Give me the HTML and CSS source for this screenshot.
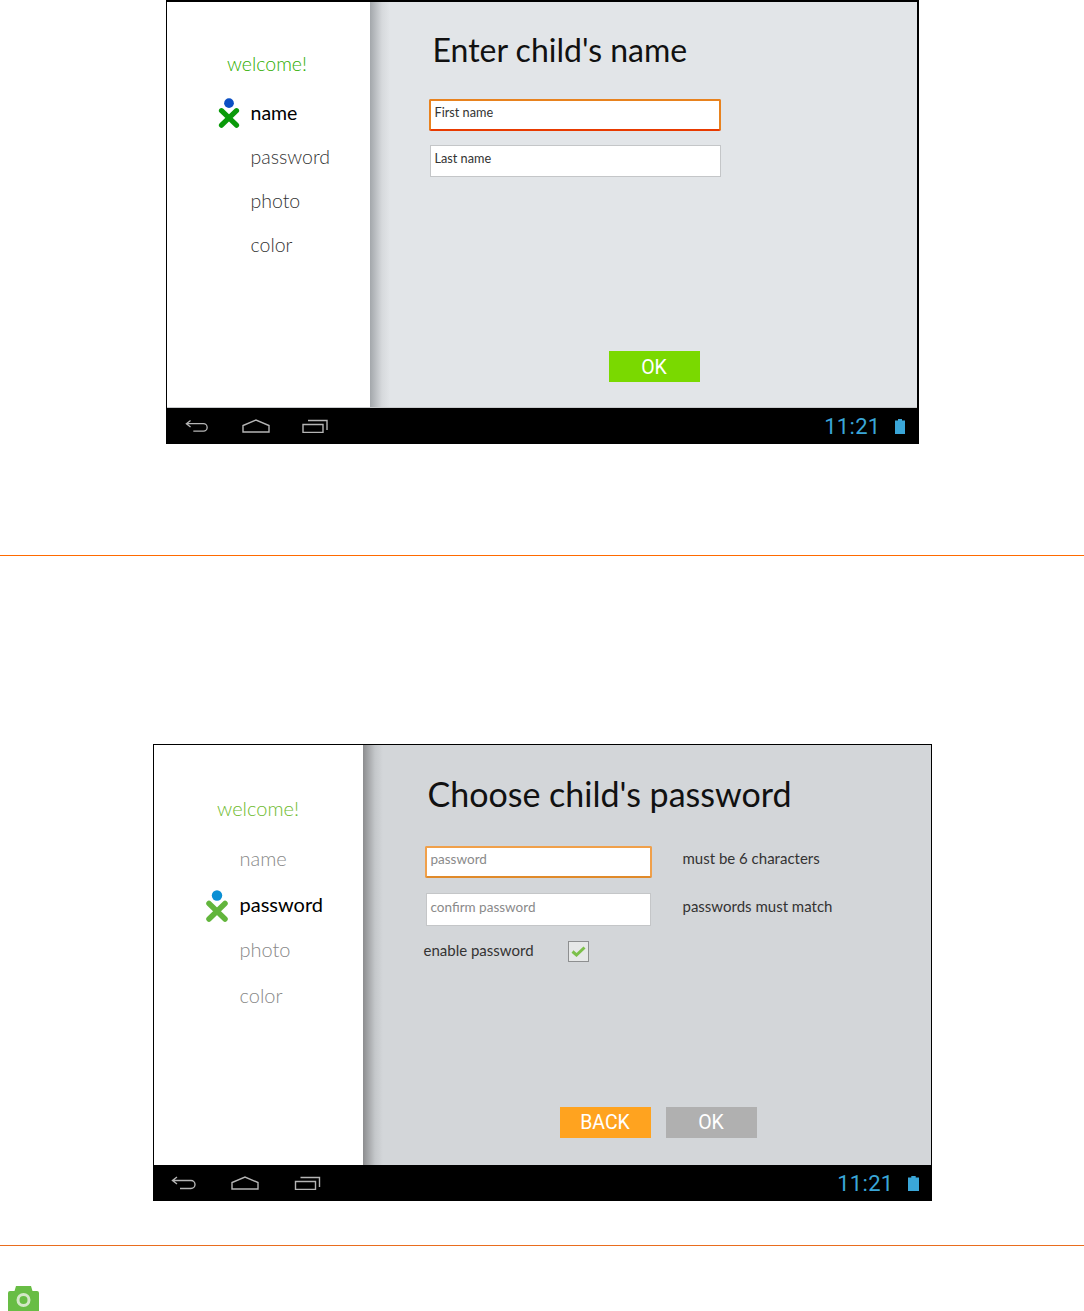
FILE: index.html
```html
<!DOCTYPE html>
<html lang="en">
<head>
<meta charset="utf-8">
<title>Child setup</title>
<link rel="stylesheet" href="styles.css">
</head>
<body>
<section class="fig fig-one">
  <div class="tablet tablet-one">
    <div class="app">
      <nav class="side side-one">
        <div class="welcome">welcome!</div>
        <div class="step current"><svg class="xo" viewBox="0 0 24 32"><circle cx="12" cy="5.5" r="5.2" fill="#0b4fc4"/><path d="M4 13.5 20 29M20 13.5 4 29" stroke="#0a9a0a" stroke-width="5.5" stroke-linecap="round"/></svg><span>name</span></div>
        <div class="step">password</div>
        <div class="step">photo</div>
        <div class="step">color</div>
      </nav>
      <main class="pane pane-one">
        <h1>Enter child's name</h1>
        <div class="field focus">First name</div>
        <div class="field">Last name</div>
        <div class="actions"><div class="btn green">OK</div></div>
      </main>
    </div>
    <footer class="bar">
      <div class="keys">
        <svg class="k-back" viewBox="0 0 26 14"><path d="M6 1 1.5 4.5 6 8M2 4.5H20a4 4 0 0 1 0 8H9" fill="none" stroke="#b5b5b5" stroke-width="1.4"/></svg>
        <svg class="k-home" viewBox="0 0 28 14"><path d="M1 13V6.5L14 1l13 5.5V13Z" fill="none" stroke="#b5b5b5" stroke-width="1.4"/></svg>
        <svg class="k-recent" viewBox="0 0 26 14"><path d="M1 5.5h20v8H1ZM6 1.5h19V11" fill="none" stroke="#b5b5b5" stroke-width="1.4"/></svg>
      </div>
      <div class="status"><span class="clock">11:21</span><svg class="batt" viewBox="0 0 10 15" preserveAspectRatio="none"><path d="M3 0h4v1.5H10V15H0V1.5h3Z" fill="#3aa6d8"/></svg></div>
    </footer>
  </div>
</section>
<hr class="rule rule-one">
<section class="fig fig-two">
  <div class="tablet tablet-two">
    <div class="app">
      <nav class="side side-two">
        <div class="welcome">welcome!</div>
        <div class="step">name</div>
        <div class="step current"><svg class="xo" viewBox="0 0 24 32"><circle cx="12" cy="5.5" r="5.2" fill="#0a8fd4"/><path d="M4 13.5 20 29M20 13.5 4 29" stroke="#62b53c" stroke-width="5.5" stroke-linecap="round"/></svg><span>password</span></div>
        <div class="step">photo</div>
        <div class="step">color</div>
      </nav>
      <main class="pane pane-two">
        <h1>Choose child's password</h1>
        <div class="row"><div class="field focus">password</div><div class="hint">must be 6 characters</div></div>
        <div class="row"><div class="field">confirm password</div><div class="hint">passwords must match</div></div>
        <div class="check-row"><span class="hint">enable password</span><span class="check"><svg viewBox="0 0 15 11"><path d="M1.5 5.5 5.5 9 13.5 1.5" fill="none" stroke="#7cc04a" stroke-width="3"/></svg></span></div>
        <div class="actions"><div class="btn orange">BACK</div><div class="btn grey">OK</div></div>
      </main>
    </div>
    <footer class="bar">
      <div class="keys">
        <svg class="k-back" viewBox="0 0 26 14"><path d="M6 1 1.5 4.5 6 8M2 4.5H20a4 4 0 0 1 0 8H9" fill="none" stroke="#b5b5b5" stroke-width="1.4"/></svg>
        <svg class="k-home" viewBox="0 0 28 14"><path d="M1 13V6.5L14 1l13 5.5V13Z" fill="none" stroke="#b5b5b5" stroke-width="1.4"/></svg>
        <svg class="k-recent" viewBox="0 0 26 14"><path d="M1 5.5h20v8H1ZM6 1.5h19V11" fill="none" stroke="#b5b5b5" stroke-width="1.4"/></svg>
      </div>
      <div class="status"><span class="clock">11:21</span><svg class="batt" viewBox="0 0 10 15" preserveAspectRatio="none"><path d="M3 0h4v1.5H10V15H0V1.5h3Z" fill="#3aa6d8"/></svg></div>
    </footer>
  </div>
</section>
<hr class="rule rule-two">
<svg class="camera" viewBox="0 0 31 25"><path d="M8 0h15l1.5 5H29a2 2 0 0 1 2 2V25H0V7a2 2 0 0 1 2-2h4.5Z" fill="#68bd45"/><circle cx="15.5" cy="14" r="5.5" fill="none" stroke="#d4e8c8" stroke-width="3"/></svg>
</body>
</html>
```

FILE: styles.css
```css
html, body { margin: 0; padding: 0; }
body { width: 1084px; height: 1311px; overflow: hidden; background: #fff; font-family: "Lato", "Liberation Sans", sans-serif; display: flex; flex-direction: column; align-items: center; }
.fig { display: flex; justify-content: center; width: 100%; box-sizing: border-box; flex: none; }
.fig-one { height: 555px; }
.fig-two { height: 689px; padding-top: 188px; }
.rule { width: 100%; height: 1px; margin: 0; border: 0; flex: none; }
.rule-one { background: #ff6a00; }
.rule-two { background: #e96d1e; }
.tablet { display: flex; flex-direction: column; background: #000; box-sizing: border-box; }
.tablet-one { width: 753px; height: 444px; padding: 2px 2px 0 1px; }
.tablet-two { width: 779px; height: 457px; padding: 1px 1px 0; }
.app { flex: 1; display: flex; min-height: 0; }
.tablet-one .app { border-bottom: 1px solid #c9cbcd; }
.side { background: #fff; display: flex; flex-direction: column; box-sizing: border-box; flex: none; }
.side-one { width: 203px; padding-top: 48px; }
.side-two { width: 209px; padding-top: 49px; }
.welcome { font-weight: 300; text-align: center; line-height: 28px; }
.side-one .welcome { color: #2fae00; font-size: 19.5px; padding-right: 2px; margin-bottom: 12.5px; }
.side-two .welcome { color: #6fbb2f; font-size: 20px; margin-bottom: 14px; }
.step { position: relative; font-weight: 300; }
.side-one .step { color: #333; font-size: 19.5px; height: 44px; line-height: 44px; padding-left: 84px; }
.side-two .step { color: #888; font-size: 20px; height: 45.5px; line-height: 45px; padding-left: 86px; }
.step.current span { font-weight: 400; color: #000; }
.xo { position: absolute; }
.side-one .xo { left: 50px; top: 7.5px; width: 24px; height: 30px; }
.side-two .xo { left: 51px; top: 8px; width: 24px; height: 32px; }
.pane { flex: 1; display: flex; flex-direction: column; position: relative; box-sizing: border-box; padding-top: 26px; }
.pane::before { content: ""; position: absolute; left: 0; top: 0; bottom: 0; width: 20px; }
.pane-one::before { background: linear-gradient(90deg, #a3a7ab, #d6d9dc 60%, #e2e5e8); }
.pane-two::before { background: linear-gradient(90deg, #8c8d8f, #c4c7ca 60%, #d3d6d9); }
.pane-one { background: #e2e5e8; padding-left: 60px; }
.pane-two { background: #d3d6d9; padding-left: 62px; }
h1 { margin: 0; font-weight: 400; color: #111; }
.pane-one h1 { font-size: 32px; line-height: 44px; margin-left: 3px; margin-bottom: 27px; }
.pane-two h1 { font-size: 34px; line-height: 46px; margin-left: 3px; margin-bottom: 29px; }
.field { background: #fff; box-sizing: border-box; color: #333; border: 1px solid #c4c6c8; }
.pane-one .field { width: 291px; height: 32px; line-height: 24px; padding-left: 4px; margin-bottom: 14px; font-size: 12.7px; }
.pane-one .field.focus { border: 2px solid #e8821e; border-bottom-color: #e83a00; border-radius: 2px; padding-left: 4px; line-height: 22px; margin-left: -1px; width: 292px; }
.pane-two .field { width: 225px; height: 33px; line-height: 26px; padding-left: 4px; color: #8a8a8a; font-size: 13.5px; margin-left: 1px; }
.pane-two .field.focus { width: 227px; height: 32px; margin-left: 0; line-height: 22px; border: 2px solid #f0a04a; border-bottom-color: #e08a2a; border-radius: 2px; }
.row { display: grid; grid-template-columns: 258px 1fr; align-items: start; height: 47px; }
.row .hint { line-height: 24px; }
.row + .row .hint { padding-top: 1px; }
.hint { font-size: 15px; color: #333; }
.check-row { display: flex; align-items: center; height: 22px; margin-left: -1px; }
.check-row .hint { padding-bottom: 2px; }
.check { width: 21px; height: 21px; box-sizing: border-box; border: 1px solid #8d8f90; background: #e6e8e8; margin-left: 34px; display: flex; align-items: center; justify-content: center; }
.check svg { width: 15px; height: 11px; }
.actions { display: flex; gap: 15px; margin-top: auto; }
.pane-one .actions { margin-bottom: 25px; margin-left: 179px; }
.pane-two .actions { margin-bottom: 27px; margin-left: 135px; }
.btn { width: 91px; height: 31px; color: #fff; font: 400 19.5px/32px "Roboto", sans-serif; text-align: center; }
.green { background: #7ad900; line-height: 34px; }
.orange { background: #ffa31f; }
.grey { background: #b0b0b0; }
.bar { flex: none; height: 36px; background: #000; display: flex; align-items: center; justify-content: space-between; }
.keys { display: flex; align-items: center; }
.k-back, .k-home, .k-recent { height: 14px; }
.tablet-one .k-back { width: 24px; margin-left: 18px; }
.tablet-one .k-home { width: 28px; margin-left: 33px; }
.tablet-one .k-recent { width: 26px; margin-left: 32px; }
.tablet-two .k-back { width: 26px; margin-left: 17px; }
.tablet-two .k-home { width: 28px; margin-left: 34px; }
.tablet-two .k-recent { width: 27px; margin-left: 35px; }
.status { display: flex; align-items: center; margin-right: 12px; }
.clock { font: 400 22px/36px "Roboto", sans-serif; color: #3aa6d8; letter-spacing: 0.3px; padding-top: 2px; }
.batt { height: 15px; margin-left: 14px; }
.tablet-one .batt { width: 10px; }
.tablet-two .batt { width: 11px; }
.camera { align-self: flex-start; flex: none; width: 31px; height: 25px; margin: 40px 0 0 8px; }
```
